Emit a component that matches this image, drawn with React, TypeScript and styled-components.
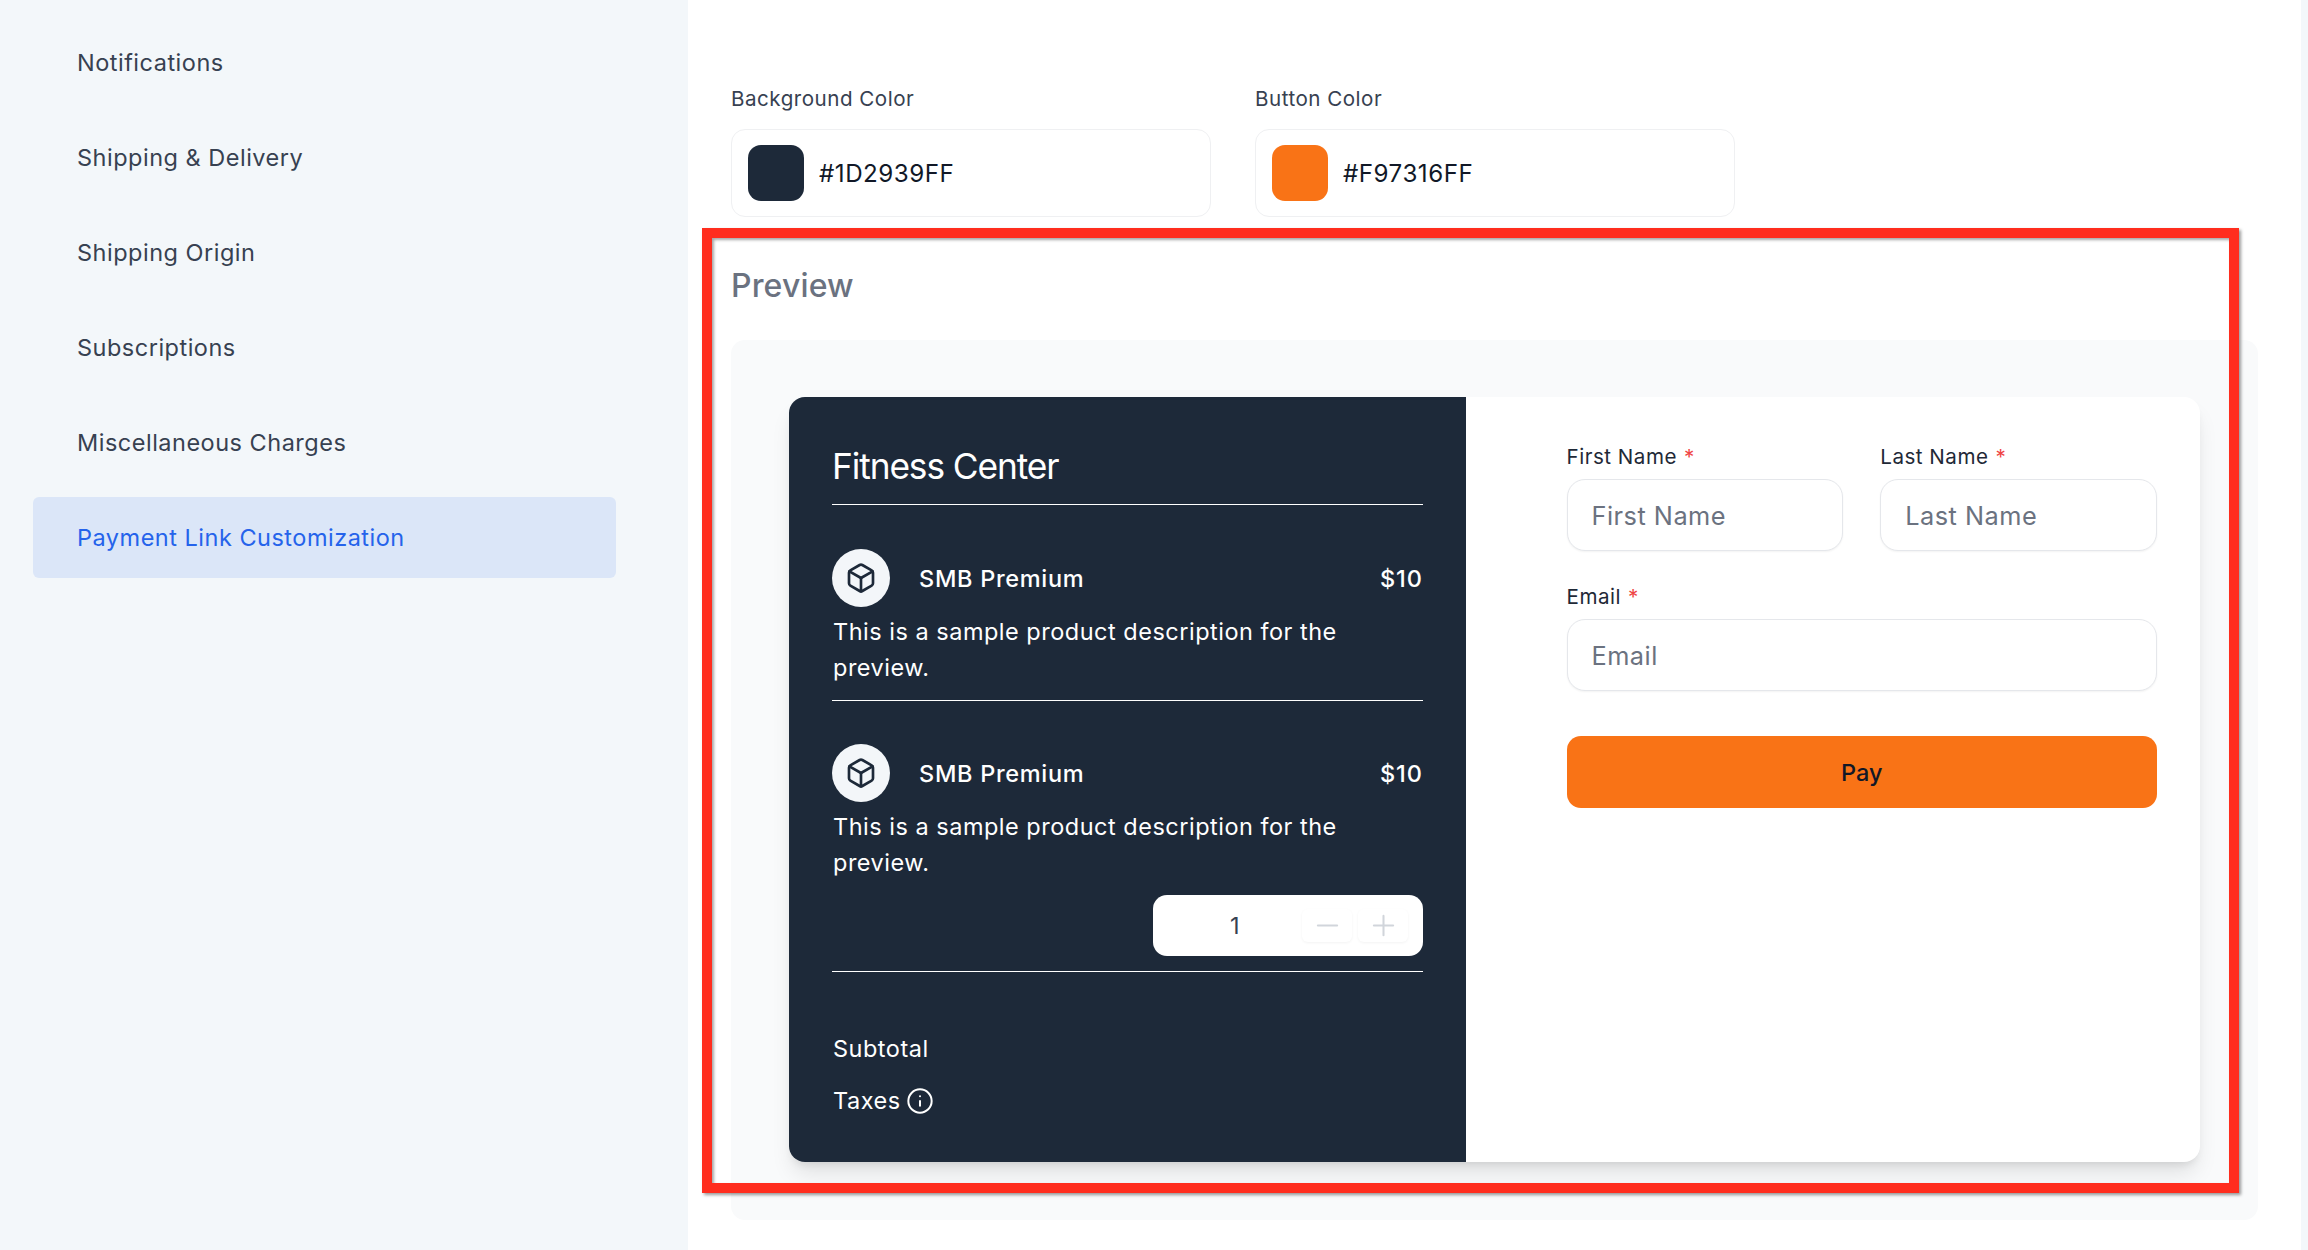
import React from "react";
import styled, { createGlobalStyle } from "styled-components";
import { Box, Info, Minus, Plus } from "lucide-react";

const Global = createGlobalStyle`
  html, body { margin: 0; padding: 0; background: #f3f7fa; }
  * { box-sizing: border-box; }
  body { font-family: Inter, "Noto Sans", sans-serif; }
`;

const Page = styled.div`
  position: relative;
  display: flex;
  width: 2308px;
  height: 1250px;
  overflow: hidden;
  background: #f3f7fa;
  letter-spacing: 0.5px;
`;

const Sidebar = styled.nav`
  flex: 0 0 688px;
  display: flex;
  flex-direction: column;
  gap: 14px;
  padding: 22px 0 0 33px;
`;

const NavItem = styled.div<{ $active?: boolean }>`
  display: flex;
  align-items: center;
  width: 583px;
  height: 81px;
  padding-left: 44px;
  border-radius: 6px;
  font-size: 23.5px;
  color: ${(p) => (p.$active ? "#2563eb" : "#374151")};
  background: ${(p) => (p.$active ? "#dbe6f8" : "transparent")};
`;

const Main = styled.main`
  flex: 0 0 1613px;
  background: #fff;
  padding: 84px 0 0 43px;
`;

const ColorRow = styled.div`
  display: flex;
  gap: 44px;
`;

const ColorGroup = styled.div`
  width: 480px;
`;

const ColorLabel = styled.div`
  height: 30px;
  line-height: 30px;
  font-size: 20.6px;
  color: #374151;
  margin-bottom: 15px;
`;

const ColorField = styled.div`
  display: flex;
  align-items: center;
  gap: 15px;
  height: 88px;
  padding-left: 16px;
  border: 1px solid #eff0f2;
  border-radius: 14px;
  font-size: 24.2px;
  letter-spacing: 0.5px;
  color: #111827;
`;

const Swatch = styled.div<{ $color: string }>`
  width: 56px;
  height: 56px;
  border-radius: 13px;
  background: ${(p) => p.$color};
`;

const PreviewTitle = styled.h2`
  margin: 46px 0 0;
  height: 46px;
  line-height: 46px;
  font-size: 32px;
  font-weight: 500;
  letter-spacing: 0.15px;
  color: #6b7280;
`;

const PreviewPanel = styled.section`
  width: 1527px;
  height: 880px;
  margin-top: 31px;
  padding: 57px 0 0 58px;
  background: #f9fafb;
  border-radius: 14px;
`;

const Card = styled.div`
  display: flex;
  width: 1411px;
  height: 765px;
  background: #fff;
  border-radius: 16px;
  box-shadow: 0 15px 22px -4px rgba(0, 0, 0, 0.1), 0 6px 9px -4px rgba(0, 0, 0, 0.1);
`;

const Summary = styled.div`
  flex: 0 0 677px;
  padding: 0 43px;
  background: #1d2939;
  border-radius: 16px 0 0 16px;
  color: #fff;
`;

const Title = styled.div`
  height: 108px;
  padding: 47px 0 0;
  line-height: 46px;
  font-size: 35.3px;
  letter-spacing: -1.1px;
  border-bottom: 1px solid #fff;
`;

const Product = styled.div<{ $top: number }>`
  padding-top: ${(p) => p.$top}px;
`;

const ProductHead = styled.div`
  display: flex;
  align-items: center;
  height: 58px;
`;

const IconCircle = styled.div`
  display: flex;
  align-items: center;
  justify-content: center;
  width: 58px;
  height: 58px;
  margin-right: 29px;
  border-radius: 50%;
  background: #f3f6f9;
  color: #1d2939;
`;

const ProductName = styled.div`
  flex: 1;
  font-size: 23.5px;
  font-weight: 500;
  letter-spacing: 0.7px;
`;

const Price = styled.div`
  font-size: 23.5px;
  font-weight: 500;
  letter-spacing: 1px;
`;

const Description = styled.p`
  margin: 7px 0 0;
  width: 560px;
  padding-left: 1px;
  font-size: 23.5px;
  line-height: 36px;
`;

const Rule = styled.div<{ $top?: number }>`
  height: 1px;
  margin-top: ${(p) => p.$top ?? 0}px;
  background: #fff;
`;

const Quantity = styled.div`
  display: flex;
  align-items: center;
  width: 270px;
  height: 61px;
  margin: 14px 0 15px auto;
  padding-right: 15px;
  border-radius: 14px;
  background: #fff;
  color: #374151;
  font-size: 23.5px;
`;

const QuantityValue = styled.div`
  flex: 1;
  text-align: center;
  padding-left: 21px;
`;

const StepButton = styled.div`
  display: flex;
  align-items: center;
  justify-content: center;
  width: 50px;
  height: 33px;
  margin-left: 6px;
  border-radius: 6px;
  color: #d1d5db;
  box-shadow: 0 1px 3px rgba(0, 0, 0, 0.05);
`;

const Totals = styled.div`
  padding-top: 58px;
  padding-left: 1px;
  font-size: 23.5px;
`;

const TotalRow = styled.div`
  display: flex;
  align-items: center;
  gap: 5px;
  height: 36px;
  margin-bottom: 16px;
`;

const InfoIcon = styled(Info)`
  margin-top: 2px;
`;

const FormPane = styled.form`
  flex: 1;
  padding: 46px 43px 0 100.5px;
`;

const FieldRow = styled.div`
  display: flex;
  gap: 37px;
`;

const Field = styled.div`
  flex: 1;
  margin-bottom: 32px;
  min-width: 0;
`;

const FieldLabel = styled.label`
  display: block;
  height: 28px;
  line-height: 28px;
  margin-bottom: 8px;
  font-size: 20.6px;
  font-weight: 400;
  color: #1f2937;
`;

const Required = styled.span`
  margin-left: 7px;
  color: #ef4444;
`;

const TextInput = styled.input`
  display: block;
  width: 100%;
  height: 72px;
  padding: 0 24px;
  border: 1.5px solid #e5e7eb;
  border-radius: 18px;
  outline: none;
  background: #fff;
  box-shadow: 0 1px 2px rgba(0, 0, 0, 0.05);
  font-family: inherit;
  font-size: 25.3px;
  letter-spacing: 0.5px;
  &::placeholder { color: #6b7280; opacity: 1; }
`;

const PayButton = styled.button`
  display: block;
  width: 100%;
  height: 72px;
  margin-top: 45px;
  border: 0;
  border-radius: 14px;
  background: #f97316;
  color: #111827;
  font-family: inherit;
  font-size: 23.5px;
  font-weight: 500;
`;

const Annotation = styled.div`
  position: absolute;
  left: 702px;
  top: 228px;
  width: 1537px;
  height: 965px;
  border: 10px solid #ff2d1e;
  box-shadow: 2px 2px 3px rgba(0, 0, 0, 0.4), inset 2px 2px 3px rgba(0, 0, 0, 0.35);
  pointer-events: none;
`;

const nav = [
  "Notifications",
  "Shipping & Delivery",
  "Shipping Origin",
  "Subscriptions",
  "Miscellaneous Charges",
];

const ProductBlock = ({ top }: { top: number }) => (
  <Product $top={top}>
    <ProductHead>
      <IconCircle>
        <Box size={32} />
      </IconCircle>
      <ProductName>SMB Premium</ProductName>
      <Price>$10</Price>
    </ProductHead>
    <Description>This is a sample product description for the preview.</Description>
  </Product>
);

export default function App() {
  return (
    <Page>
      <Global />
      <Sidebar>
        {nav.map((n) => (
          <NavItem key={n}>{n}</NavItem>
        ))}
        <NavItem $active>Payment Link Customization</NavItem>
      </Sidebar>
      <Main>
        <ColorRow>
          <ColorGroup>
            <ColorLabel>Background Color</ColorLabel>
            <ColorField>
              <Swatch $color="#1d2939" />
              #1D2939FF
            </ColorField>
          </ColorGroup>
          <ColorGroup>
            <ColorLabel>Button Color</ColorLabel>
            <ColorField>
              <Swatch $color="#f97316" />
              #F97316FF
            </ColorField>
          </ColorGroup>
        </ColorRow>
        <PreviewTitle>Preview</PreviewTitle>
        <PreviewPanel>
          <Card>
            <Summary>
              <Title>Fitness Center</Title>
              <ProductBlock top={44} />
              <Rule $top={14} />
              <ProductBlock top={43} />
              <Quantity>
                <QuantityValue>1</QuantityValue>
                <StepButton>
                  <Minus size={33} strokeWidth={1.5} />
                </StepButton>
                <StepButton>
                  <Plus size={33} strokeWidth={1.5} />
                </StepButton>
              </Quantity>
              <Rule />
              <Totals>
                <TotalRow>Subtotal</TotalRow>
                <TotalRow>
                  Taxes <InfoIcon size={28} strokeWidth={1.7} />
                </TotalRow>
              </Totals>
            </Summary>
            <FormPane>
              <FieldRow>
                <Field>
                  <FieldLabel>
                    First Name<Required>*</Required>
                  </FieldLabel>
                  <TextInput placeholder="First Name" readOnly />
                </Field>
                <Field>
                  <FieldLabel>
                    Last Name<Required>*</Required>
                  </FieldLabel>
                  <TextInput placeholder="Last Name" readOnly />
                </Field>
              </FieldRow>
              <Field>
                <FieldLabel>
                  Email<Required>*</Required>
                </FieldLabel>
                <TextInput placeholder="Email" readOnly />
              </Field>
              <PayButton type="button">Pay</PayButton>
            </FormPane>
          </Card>
        </PreviewPanel>
      </Main>
      <Annotation />
    </Page>
  );
}
